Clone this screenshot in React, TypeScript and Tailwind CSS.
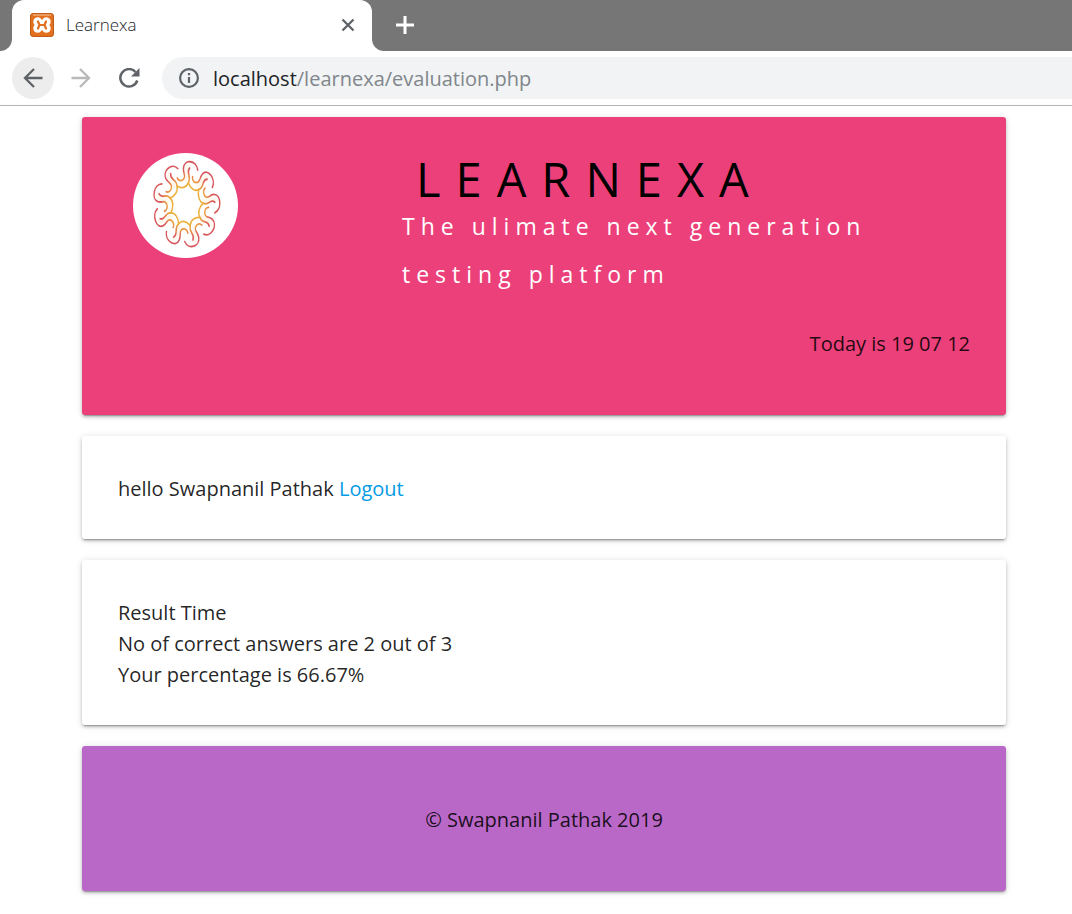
import type { ReactNode } from "react";

const arms = [0, 40, 80, 120, 160, 200, 240, 280, 320];

function Card({ className = "", children }: { className?: string; children: ReactNode }) {
  return (
    <section
      className={`rounded-[3px] px-9 shadow-[0_2px_3px_0_rgba(0,0,0,0.2),0_1px_7px_0_rgba(0,0,0,0.14),0_3px_1px_-2px_rgba(0,0,0,0.2)] ${className}`}
    >
      {children}
    </section>
  );
}

function Logo() {
  return (
    <svg viewBox="39 39 315 315" className="h-[105px] w-[105px]" role="img" aria-label="Learnexa logo">
      <defs>
        <radialGradient id="flame" gradientUnits="userSpaceOnUse" cx="199" cy="193" r="125">
          <stop offset="0.5" stopColor="#edb03c" />
          <stop offset="0.64" stopColor="#e8934a" />
          <stop offset="0.82" stopColor="#d8575c" />
        </radialGradient>
      </defs>
      <circle cx="196.500" cy="196.500" r="157.500" fill="#fff" />
      <g fill="none" strokeLinecap="round">
        {arms.map((a) => (
          <g key={a} transform={`translate(199 193) scale(0.78 1) rotate(${a}) translate(-199 -193)`}>
            <path d="M208 78C188 90 208 108 196 122" stroke="#fef8ec" strokeWidth="12" />
            <g stroke="url(#flame)" strokeWidth="5.500">
              <path d="M243 90C238 60 192 56 188 84C186 102 200 108 186 119C178 124 168 122 164 114" />
              <path d="M212 84C196 98 220 108 207 128C200 144 178 146 163 138" />
            </g>
          </g>
        ))}
      </g>
    </svg>
  );
}

export default function App() {
  return (
    <div className="min-h-screen bg-white font-['Open_Sans','Noto_Sans',sans-serif] text-[20px] leading-[31px] text-black/87">
      <div className="flex h-[51px] bg-[#767676]">
        <div className="w-3 bg-white">
          <div className="h-full rounded-br-[12px] bg-[#767676]" />
        </div>
        <div className="flex w-[360px] items-center rounded-t-[12px] bg-white pb-[2px] pl-[18px] pr-[17px]">
          <svg viewBox="0 0 24 24" className="h-6 w-6" aria-hidden="true">
            <rect x="0.500" y="0.500" width="23" height="23" rx="2.500" fill="#e2701f" stroke="#bf5c1a" />
            <path d="M3 2H21" stroke="#f6c79c" strokeWidth="1" />
            <path
              d="M8 5.500C4 5.500 3.500 10 6.500 12C3.500 14 4 18.500 8 18.500C10.500 18.500 10.500 15.500 12 15.500S13.500 18.500 16 18.500C20 18.500 20.500 14 17.500 12C20.500 10 20 5.500 16 5.500C13.500 5.500 13.500 8.500 12 8.500S10.500 5.500 8 5.500Z"
              fill="#fff" stroke="#fff" strokeWidth="2.500" strokeLinejoin="round"
            />
            <path d="M8 8.500L9.500 12L8 15.500M16 8.500L14.500 12L16 15.500M9.500 12H14.500" fill="none" stroke="#e2701f" strokeWidth="2.200" strokeLinecap="round" strokeLinejoin="round" />
          </svg>
          <span className="ml-3 flex-1 text-[17px] font-light text-[#202428]">Learnexa</span>
          <button aria-label="Close tab" className="text-[#5f6368]">
            <svg viewBox="0 0 14 14" className="h-[14px] w-[14px]" fill="none" stroke="currentColor" strokeWidth="2.300">
              <path d="M1.500 1.500L12.500 12.500M12.500 1.500L1.500 12.500" />
            </svg>
          </button>
        </div>
        <div className="flex-1 bg-white">
          <div className="flex h-full items-center rounded-bl-[12px] bg-[#767676] pb-[2px] pl-[23px]">
            <button aria-label="New tab" className="text-white">
              <svg viewBox="0 0 20 20" className="h-5 w-5" fill="none" stroke="currentColor" strokeWidth="3">
                <path d="M10 1V19M1 10H19" />
              </svg>
            </button>
          </div>
        </div>
      </div>

      <nav className="flex h-[55px] items-center border-b border-[#b4b4b4] pl-3" aria-label="Browser toolbar">
        <button aria-label="Back" className="flex h-[42px] w-[42px] items-center justify-center rounded-full bg-[#ededed] text-[#5f6368]">
          <svg viewBox="0 0 20 20" className="h-5 w-5" fill="none" stroke="currentColor" strokeWidth="2.300">
            <path d="M19.500 10H2M11 1L2 10L11 19" />
          </svg>
        </button>
        <button aria-label="Forward" className="ml-[17px] text-[#b9b9b9]">
          <svg viewBox="0 0 20 20" className="h-5 w-5" fill="none" stroke="currentColor" strokeWidth="2.300">
            <path d="M0.500 10H18M9 1L18 10L9 19" />
          </svg>
        </button>
        <button aria-label="Reload" className="ml-7 text-[#5f6368]">
          <svg viewBox="0 0 21 20" className="h-5 w-[21px]" fill="none" stroke="currentColor" strokeWidth="2.500">
            <path d="M18.300 12.500A8.700 8.700 0 1 1 16.500 4" />
            <path d="M20.500 0V8.500H12Z" fill="currentColor" stroke="none" />
          </svg>
        </button>
        <div className="ml-[22px] flex h-[42px] flex-1 items-center rounded-l-full bg-[#f1f3f4] pl-[17px]">
          <svg viewBox="0 0 20 20" className="h-5 w-5" fill="none" stroke="#5f6368" strokeWidth="2.200" aria-hidden="true">
            <circle cx="10" cy="10" r="8.900" />
            <path d="M10 9V15M10 5V7.200" />
          </svg>
          <span className="ml-[14px] text-[#212428]">
            localhost<span className="text-[#80868b]">/learnexa/evaluation.php</span>
          </span>
        </div>
      </nav>

      <main className="ml-[82px] mr-[66px] flex flex-col gap-[21px] pt-[11px]">
        <Card className="min-h-[298px] bg-[#ec407a] pb-14 pt-9">
          <header className="flex">
            <div className="w-[284px] pl-[15px]">
              <Logo />
            </div>
            <div className="flex-1 text-black">
              <h1 className="pl-[14px] text-[47px] leading-[52px] tracking-[15px]">LEARNEXA</h1>
              <p className="-mt-[3px] text-[23px] leading-[48px] tracking-[6px] text-white">
                The ulimate next generation
                <br />
                testing platform
              </p>
            </div>
          </header>
          <p className="mt-[30px] text-right">Today is 19 07 12</p>
        </Card>

        <Card className="bg-white pb-[35px] pt-[37px]">
          hello Swapnanil Pathak <a href="#logout" className="text-[#039be5]">Logout</a>
        </Card>

        <Card className="bg-white pb-[35px] pt-[37px]">
          <p>Result Time</p>
          <p>No of correct answers are 2 out of 3</p>
          <p>Your percentage is 66.67%</p>
        </Card>

        <Card className="bg-[#ba68c8] pb-14 pt-[58px] text-center">
          <footer>© Swapnanil Pathak 2019</footer>
        </Card>
      </main>
    </div>
  );
}
